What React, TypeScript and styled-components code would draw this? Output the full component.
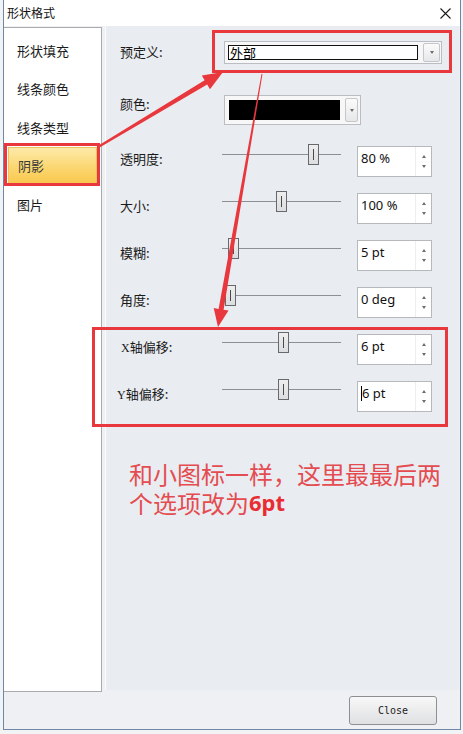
import React from 'react'
import styled, { createGlobalStyle } from 'styled-components'

const GlobalStyle = createGlobalStyle`
  html, body {
    margin: 0;
    padding: 0;
  }
  body {
    background: #f2f3f5;
    font-family: "Noto Sans CJK SC", "Noto Sans", sans-serif;
  }
`

const RED = '#e8383d'

const sideItems = ['形状填充', '线条颜色', '线条类型', '阴影', '图片']

const sliders = [
  { label: '透明度:', pos: 86, value: '80 %' },
  { label: '大小:', pos: 54, value: '100 %' },
  { label: '模糊:', pos: 6, value: '5 pt' },
  { label: '角度:', pos: 3, value: '0 deg' },
  { latin: 'X', label: '轴偏移:', pos: 56, value: '6 pt', shift: 1 },
  { latin: 'Y', label: '轴偏移:', pos: 56, value: '6 pt', shift: -3, caret: true },
]

export default function App() {
  return (
    <Page>
      <GlobalStyle />
      <Dialog>
        <TitleBar>
          <Title>形状格式</Title>
          <svg width="11" height="11" viewBox="0 0 11 11">
            <path d="M0.5 0.5 L10.5 10.5 M10.5 0.5 L0.5 10.5" stroke="#1b1b1b" strokeWidth="1.1" />
          </svg>
        </TitleBar>
        <Body>
          <Sidebar>
            {sideItems.map((item, i) => (
              <SideItem key={item} $active={i === 3}>
                {item}
              </SideItem>
            ))}
          </Sidebar>
          <Content>
            <Row>
              <Label $pt={2}>预定义:</Label>
              <PresetCombo>
                <PresetField>外部</PresetField>
                <DropButton $w={17} $h={19}>
                  <DownTri />
                </DropButton>
              </PresetCombo>
            </Row>
            <Row $mt={31}>
              <Label $pt={0}>颜色:</Label>
              <ColorCombo>
                <ColorSwatch />
                <DropButton $w={13} $h={24}>
                  <DownTri />
                </DropButton>
              </ColorCombo>
            </Row>
            {sliders.map((s, i) => (
              <Row key={i} $mt={i === 0 ? 21 : 16}>
                <Label $pt={4} $shift={s.shift}>
                  {s.latin && <Latin>{s.latin}</Latin>}
                  {s.label}
                </Label>
                <Track>
                  <Thumb $pos={s.pos} />
                </Track>
                <Spin>
                  <SpinValue>
                    {s.caret && <Caret />}
                    {s.value}
                  </SpinValue>
                  <SpinButtons>
                    <UpTri />
                    <DownTri />
                  </SpinButtons>
                </Spin>
              </Row>
            ))}
            <Note>
              <NoteLine>和小图标一样，这里最最后两</NoteLine>
              <NoteLine>
                个选项改为<Strong>6pt</Strong>
              </NoteLine>
            </Note>
          </Content>
        </Body>
        <Footer>
          <CloseButton>Close</CloseButton>
        </Footer>
      </Dialog>

      <Overlay width="463" height="734" viewBox="0 0 463 734">
        <rect x="5.5" y="144.5" width="93" height="40" fill="none" stroke={RED} strokeWidth="3" />
        <rect x="213.5" y="31.5" width="237" height="40" fill="none" stroke={RED} strokeWidth="3" />
        <rect x="93.5" y="328.5" width="353" height="97" fill="none" stroke={RED} strokeWidth="3" />
        <polygon
          points="99.6,147.6 98.4,145.6 204.6,80.2 201.8,75.4 223,72 210,89.2 207.2,84.4"
          fill={RED}
        />
        <polygon
          points="262.5,74.1 261.5,73.9 218.6,308.9 213.7,308 218,327 228.5,310.6 223.6,309.7"
          fill={RED}
        />
      </Overlay>
    </Page>
  )
}

const Page = styled.div`
  position: relative;
  width: 463px;
  height: 734px;
  overflow: hidden;
  padding-left: 3px;
  box-sizing: border-box;
`

const Dialog = styled.div`
  width: 458px;
  height: 730px;
  box-sizing: border-box;
  border: 1px solid #6f88a6;
  border-top: none;
  background: #eef0f3;
  display: flex;
  flex-direction: column;
`

const TitleBar = styled.div`
  flex: none;
  height: 26px;
  background: #fff;
  display: flex;
  align-items: center;
  justify-content: space-between;
  padding: 0 9px 0 3px;
`

const Title = styled.div`
  font-size: 12px;
  color: #111;
  line-height: 16px;
`

const Body = styled.div`
  flex: none;
  height: 666px;
  display: flex;
`

const Sidebar = styled.div`
  width: 98px;
  height: 665px;
  margin-top: 1px;
  box-sizing: border-box;
  background: #fff;
  border: 1px solid #a9abae;
  border-left: none;
  padding-top: 3px;
`

const SideItem = styled.div<{ $active?: boolean }>`
  height: 38.5px;
  box-sizing: border-box;
  display: flex;
  align-items: center;
  font-size: 13px;
  color: ${({ $active }) => ($active ? '#3a3a3a' : '#1a1a1a')};
  padding-left: ${({ $active }) => ($active ? '9px' : '13px')};
  margin: ${({ $active }) => ($active ? '0 4px' : '0')};
  border: ${({ $active }) => ($active ? '1px solid #e7c25e' : 'none')};
  background: ${({ $active }) =>
    $active ? 'linear-gradient(#fdeaa9, #fbd670 55%, #f9c84c)' : 'transparent'};
`

const Content = styled.div`
  flex: 1;
  height: 664px;
  margin: 0 1px 0 3px;
  box-sizing: border-box;
  border-left: 1px solid #fafbfc;
  background: #e9ecf0;
  padding: 15px 0 0 14px;
`

const Row = styled.div<{ $mt?: number }>`
  display: flex;
  align-items: flex-start;
  margin-top: ${({ $mt }) => $mt ?? 0}px;
`

const Label = styled.div<{ $pt: number; $shift?: number }>`
  width: 102px;
  flex: none;
  box-sizing: border-box;
  font-size: 13px;
  line-height: 18px;
  color: #1a1a1a;
  padding-top: ${({ $pt }) => $pt}px;
  margin-left: ${({ $shift }) => $shift ?? 0}px;
  margin-right: ${({ $shift }) => -($shift ?? 0)}px;
`

const Latin = styled.span`
  font-family: "Liberation Serif", serif;
  font-size: 12px;
`

const PresetCombo = styled.div`
  margin-left: 2px;
  width: 218px;
  height: 23px;
  box-sizing: border-box;
  border: 1px solid #babdc1;
  background: #f7f7f7;
  display: flex;
  align-items: center;
  gap: 5px;
  padding: 0 1px 0 3px;
`

const PresetField = styled.div`
  width: 190px;
  height: 15px;
  box-sizing: border-box;
  border: 1px solid #111;
  background: #fff;
  font-size: 13px;
  line-height: 13px;
  padding-left: 1px;
  color: #000;
`

const ColorCombo = styled.div`
  margin-left: 2px;
  width: 137px;
  height: 30px;
  box-sizing: border-box;
  border: 1px solid #babdc1;
  background: #f7f7f7;
  display: flex;
  align-items: center;
  gap: 5px;
  padding: 0 2px 0 4px;
`

const ColorSwatch = styled.div`
  width: 111px;
  height: 20px;
  background: #000;
`

const DropButton = styled.div<{ $w: number; $h: number }>`
  width: ${({ $w }) => $w}px;
  height: ${({ $h }) => $h}px;
  box-sizing: border-box;
  border: 1px solid #c4c6c9;
  border-radius: 2px;
  background: linear-gradient(#fbfbfb, #e6e7e9);
  display: flex;
  align-items: center;
  justify-content: center;
`

const DownTri = styled.div`
  width: 0;
  height: 0;
  border-left: 2.5px solid transparent;
  border-right: 2.5px solid transparent;
  border-top: 3px solid #6c6c6c;
`

const UpTri = styled.div`
  width: 0;
  height: 0;
  border-left: 2.5px solid transparent;
  border-right: 2.5px solid transparent;
  border-bottom: 3px solid #6c6c6c;
`

const Track = styled.div`
  position: relative;
  width: 119px;
  height: 31px;
  flex: none;

  &::before {
    content: '';
    position: absolute;
    left: 0;
    right: 0;
    top: 8px;
    height: 1px;
    background: #8d8f92;
  }
`

const Thumb = styled.div<{ $pos: number }>`
  position: absolute;
  top: -2px;
  left: ${({ $pos }) => $pos}px;
  width: 11px;
  height: 21px;
  box-sizing: border-box;
  border: 1px solid #66686b;
  background: linear-gradient(#eeeeee, #dcdddf);

  &::after {
    content: '';
    position: absolute;
    left: 4px;
    top: 4px;
    bottom: 4px;
    width: 1px;
    background: #4a4a4a;
  }
`

const Spin = styled.div`
  margin-left: 16px;
  width: 75px;
  height: 31px;
  box-sizing: border-box;
  border: 1px solid #b6b8bb;
  background: #fff;
  display: flex;
`

const SpinValue = styled.div`
  flex: 1;
  display: flex;
  align-items: flex-start;
  padding: 3px 0 0 3px;
  font-family: "Noto Sans", sans-serif;
  font-size: 13px;
  line-height: 17px;
  color: #111;
  white-space: pre;
`

const Caret = styled.span`
  display: inline-block;
  width: 0;
  height: 15px;
  border-left: 1px solid #000;
  margin-top: 1px;
`

const SpinButtons = styled.div`
  width: 16px;
  border-left: 1px solid #eceef0;
  display: flex;
  flex-direction: column;
  align-items: center;
  justify-content: space-around;
  padding: 4px 0;
  box-sizing: border-box;
`

const Note = styled.div`
  margin: 47px 0 0 9px;
  display: flex;
  flex-direction: column;
  gap: 0;
`

const NoteLine = styled.div`
  height: 29px;
  display: flex;
  align-items: center;
  font-size: 24px;
  line-height: 29px;
  color: #e44c51;
  white-space: nowrap;
  overflow: visible;
`

const Strong = styled.span`
  font-family: "Noto Sans", sans-serif;
  font-size: 22px;
  font-weight: 700;
  color: #e82c32;
`

const Footer = styled.div`
  flex: 1;
  display: flex;
  justify-content: flex-end;
  align-items: flex-start;
  padding: 4px 23px 0 0;
`

const CloseButton = styled.div`
  width: 88px;
  height: 29px;
  box-sizing: border-box;
  border: 1px solid #8d8f92;
  border-radius: 3px;
  background: linear-gradient(#f8f8f8, #dfe0e2);
  display: flex;
  align-items: center;
  justify-content: center;
  font-family: "DejaVu Sans Mono", monospace;
  font-size: 10px;
  color: #222;
`

const Overlay = styled.svg`
  position: absolute;
  left: 0;
  top: 0;
  pointer-events: none;
`
